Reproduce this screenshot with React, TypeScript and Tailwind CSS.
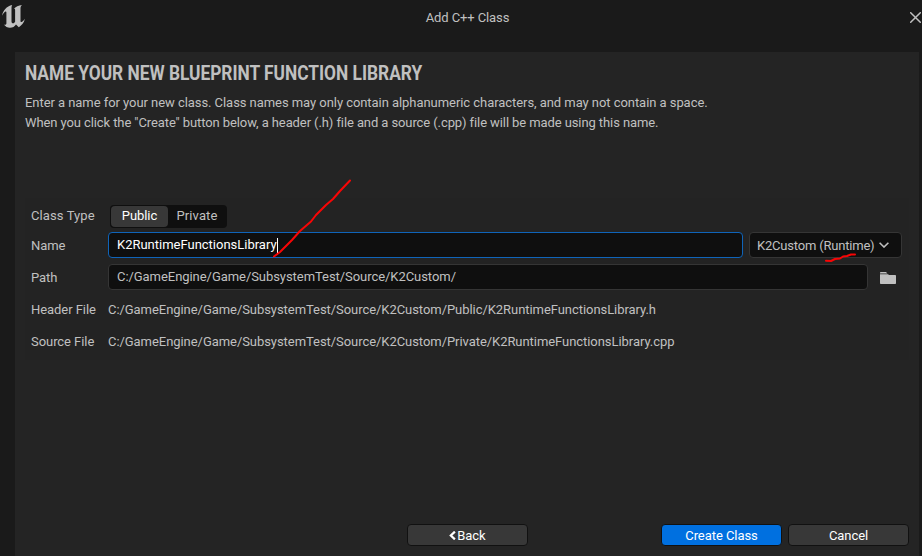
import React from "react";

function UnrealLogo() {
  return (
    <svg className="h-[23px] w-[23px]" viewBox="0 0 23 23" fill="#c0c0c0">
      <path d="M0 10.8C0.8 5.8 4.6 1.2 10.2 0C9.7 1 9.5 1.8 9.5 3.2V16.2C9.5 17.5 10.1 18.3 11.1 18.3C12 18.3 12.7 17.5 13.1 16.7V5C13.1 4 12.7 3.7 11.7 3.9C13.7 1.8 16.5 0.5 20 0C18.9 1.2 18.5 2 18.5 3.3V15.8C18.5 16.9 18.9 17.3 19.6 17C20.8 16.6 21.9 15.4 22.9 13.8C22 18.2 19.3 20.6 16.8 22.2L14 19.5C12.7 21.5 10.4 22.9 7.8 22.8C5.4 22.7 3.5 21.4 1.8 19.4C3.4 20 4.4 19.6 4.4 18.2V7.6C4.4 6.5 3.9 6.2 3.1 6.7C1.8 7.5 0.9 9 0 10.8Z" />
    </svg>
  );
}

function TextRow({ label, children }: { label: string; children: React.ReactNode }) {
  return (
    <div className="flex h-8 items-center">
      <div className="w-[77px] shrink-0">{label}</div>
      <div>{children}</div>
    </div>
  );
}

export default function App() {
  return (
    <div className="relative flex h-[556px] w-[922px] flex-col overflow-hidden whitespace-nowrap bg-[#1a1a1a] font-['Roboto',sans-serif] text-[13px] leading-5 tracking-[-0.055px] text-[#c0c0c0]">
      <header className="flex h-[52px] shrink-0 items-start">
        <div className="w-10 pl-[2px] pt-[5px]">
          <UnrealLogo />
        </div>
        <div className="flex-1 pr-[15px] pt-2 text-center tracking-[-0.1px]">Add C++ Class</div>
        <svg className="mr-px mt-3 h-[11px] w-[11px]" viewBox="0 0 11 11" stroke="#c0c0c0" strokeWidth="1.5" strokeLinecap="round">
          <path d="M0.7 0.7L10.3 10.3M10.3 0.7L0.7 10.3" />
        </svg>
      </header>

      <main className="ml-[15px] mr-[3px] flex flex-1 flex-col bg-[#242424]">
        <h1 className="ml-[10px] mt-[9px] h-6 w-fit origin-left scale-x-[0.866] text-[20px] font-bold leading-6 tracking-normal">
          NAME YOUR NEW BLUEPRINT FUNCTION LIBRARY
        </h1>
        <div className="ml-[10px] mt-2">
          <p>Enter a name for your new class. Class names may only contain alphanumeric characters, and may not contain a space.</p>
          <p className="tracking-[-0.095px]">When you click the "Create" button below, a header (.h) file and a source (.cpp) file will be made using this name.</p>
        </div>

        <section className="ml-[10px] mt-[65px] h-[162px] w-[884px] bg-[#232323] pl-[6px] pt-[6px]">
          <div className="flex h-6 items-center">
            <div className="w-[79px] tracking-[0.1px]">Class Type</div>
            <div className="flex h-[23px] w-[117px] items-center rounded-[4px] bg-[#0f0f0f] p-px">
              <div className="flex h-[21px] w-[57px] items-center justify-center rounded-[4px] bg-[#383838] text-white">Public</div>
              <div className="flex flex-1 items-center justify-center tracking-[0.1px]">Private</div>
            </div>
          </div>
          <div className="mt-[3px] flex h-[27px] items-center">
            <div className="w-[77px] pt-[2px]">Name</div>
            <div className="flex h-[26px] w-[635px] items-center rounded-[4px] border border-[#0f64b9] bg-[#0f0f0f] pl-2 pt-px text-white">
              <span className="tracking-[-0.01px]">K2RuntimeFunctionsLibrary</span>
              <span className="h-[15px] w-px bg-white" />
            </div>
            <div className="ml-[6px] flex h-[26px] w-[153px] items-center rounded-[4px] border border-[#353535] bg-[#0f0f0f] pl-[7px]">
              <span className="pt-[2px] tracking-[-0.2px]">K2Custom (Runtime)</span>
              <svg className="ml-[5px] h-[6px] w-[10px]" viewBox="0 0 10 6" fill="none" stroke="#c0c0c0" strokeWidth="1.6">
                <path d="M0.6 0.7L5 5L9.4 0.7" />
              </svg>
            </div>
          </div>
          <div className="mt-[5px] flex h-[27px] items-center">
            <div className="w-[77px] pt-[2px]">Path</div>
            <div className="flex h-[26px] w-[760px] items-center rounded-[4px] border border-[#353535] bg-[#0f0f0f] pl-2 pt-px">
              C:/GameEngine/Game/SubsystemTest/Source/K2Custom/
            </div>
            <svg className="ml-3 mt-[2px] h-3 w-4" viewBox="0 0 16 12" fill="#c0c0c0">
              <path d="M0 0.8Q0 0 0.8 0H6L7.5 1.5H0ZM0 2.3H8L9 3H15.2Q16 3 16 3.8V11.2Q16 12 15.2 12H0.8Q0 12 0 11.2Z" />
            </svg>
          </div>
          <div className="mt-1">
            <TextRow label="Header File">C:/GameEngine/Game/SubsystemTest/Source/K2Custom/Public/K2RuntimeFunctionsLibrary.h</TextRow>
            <TextRow label="Source File">C:/GameEngine/Game/SubsystemTest/Source/K2Custom/Private/K2RuntimeFunctionsLibrary.cpp</TextRow>
          </div>
        </section>

        <footer className="mb-[10px] mr-[10px] mt-auto flex justify-end text-white">
          <button className="flex h-[22px] w-[121px] items-center justify-center rounded-[4px] border border-[#111111] bg-[#383838] pt-px">
            <svg className="mb-px mr-px h-[9px] w-[7px]" viewBox="0 0 7 9" fill="none" stroke="#ffffff" strokeWidth="2.2">
              <path d="M5.9 0.6L1.8 4.5L5.9 8.4" />
            </svg>
            Back
          </button>
          <button className="ml-[133px] flex h-[22px] w-[121px] items-center justify-center rounded-[4px] border border-[#111111] bg-[#0070e0] pt-px">Create Class</button>
          <button className="ml-[6px] flex h-[22px] w-[121px] items-center justify-center rounded-[4px] border border-[#111111] bg-[#383838] pt-px">Cancel</button>
        </footer>
      </main>

      <svg className="pointer-events-none absolute left-0 top-0 h-[556px] w-[922px]" viewBox="0 0 922 556" fill="none" stroke="#f80505" strokeWidth="2" strokeLinecap="round" strokeLinejoin="round">
        <path d="M274 256.5L280 252L292 240L300 231L311 221.5L316 215L326 205L333 199L340 191L350 180.5" />
        <path d="M826 260.8L831 261L835 259L840 258.5L843 256.5L847 256L851 254.5L855 254.5" />
      </svg>
    </div>
  );
}
